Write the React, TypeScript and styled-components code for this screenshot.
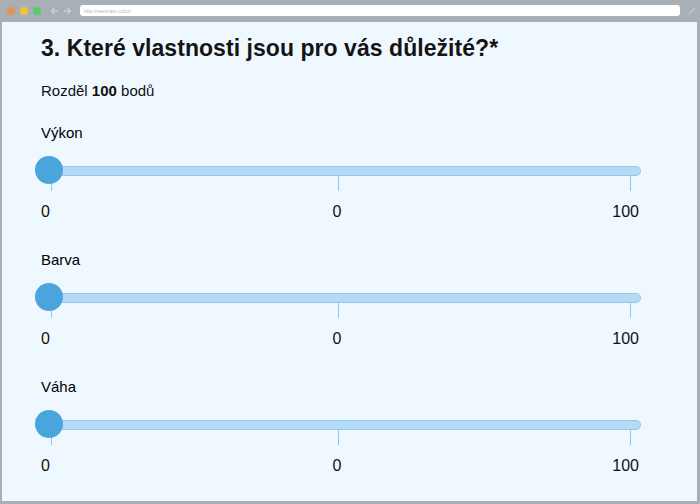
import React from 'react';
import styled, { createGlobalStyle } from 'styled-components';

const GlobalStyle = createGlobalStyle`
  html, body {
    margin: 0;
    padding: 0;
    background: #a8b0b5;
  }
  body {
    font-family: "Liberation Sans", Arial, Helvetica, sans-serif;
    color: #111;
  }
`;

const Window = styled.div`
  width: 700px;
  height: 504px;
  box-sizing: border-box;
  display: flex;
  flex-direction: column;
  background: #a8b0b5;
  padding: 0 3px 3px 2px;
`;

const TopBar = styled.div`
  height: 22px;
  flex: none;
  display: flex;
  align-items: center;
  padding-left: 5px;
  padding-bottom: 1px;
  box-sizing: border-box;
`;

const Dot = styled.span<{ $c: string }>`
  width: 8px;
  height: 8px;
  border-radius: 50%;
  background: ${p => p.$c};
  margin-right: 5px;
`;

const Arrows = styled.div`
  display: flex;
  gap: 4px;
  margin: 0 8px 0 4px;
`;

const UrlBar = styled.div`
  flex: none;
  width: 600px;
  height: 11px;
  background: #fff;
  border-radius: 3px;
  display: flex;
  align-items: center;
  padding-left: 4px;
  box-sizing: border-box;
  font-size: 5px;
  color: #b5bcc0;
`;

const EditIcon = styled.div`
  margin-left: 8px;
  display: flex;
`;

const Content = styled.main`
  flex: 1;
  background: #f0f8ff;
  padding: 12px 56px 0 33px;
`;

const Title = styled.h1`
  margin: 0;
  padding-left: 6px;
  font-size: 23px;
  line-height: 28px;
  font-weight: 700;
  letter-spacing: 0.05px;
  color: #141414;
`;

const Lead = styled.p`
  margin: 19px 0 0;
  padding-left: 6px;
  font-size: 15px;
  line-height: 20px;
`;

const Field = styled.section`
  margin-top: 22px;
  & + & {
    margin-top: 28.5px;
  }
`;

const FieldLabel = styled.div`
  padding-left: 6px;
  font-size: 15px;
  line-height: 20px;
  color: #000;
`;

const Slider = styled.div`
  position: relative;
  height: 35px;
  margin-top: 13px;
`;

const Track = styled.div`
  position: absolute;
  left: 14px;
  right: 0;
  top: 10px;
  height: 10px;
  box-sizing: border-box;
  background: #b3dbf4;
  border: 1px solid #93caec;
  border-left: 0;
  border-radius: 0 6px 6px 0;
`;

const Tick = styled.span`
  position: absolute;
  top: 20px;
  width: 1px;
  height: 15px;
  background: #8ac8ee;
`;

const Thumb = styled.span`
  position: absolute;
  left: 0;
  top: 0;
  width: 28px;
  height: 28px;
  border-radius: 50%;
  background: #4aa5dc;
`;

const Marks = styled.div`
  display: grid;
  grid-template-columns: 1fr auto 1fr;
  margin-top: 10.5px;
  padding: 0 2px 0 6px;
  font-size: 16px;
  line-height: 20px;
`;

const Mark = styled.span<{ $align: 'left' | 'center' | 'right' }>`
  text-align: ${p => p.$align};
  ${p => (p.$align === 'center' ? 'margin-right: 6px;' : '')}
`;

const fields = ['Výkon', 'Barva', 'Váha'];
const ticks = [0, 0.495, 1];

export default function App() {
  return (
    <>
      <GlobalStyle />
      <Window>
        <TopBar>
          <Dot $c="#e2964c" />
          <Dot $c="#f3c636" />
          <Dot $c="#52cf6a" />
          <Arrows>
            <svg width="9" height="8" viewBox="0 0 9 8" fill="none" stroke="#c9d0d4" strokeWidth="1.4">
              <path d="M8 4H1.5M4.5 1L1.5 4l3 3" />
            </svg>
            <svg width="9" height="8" viewBox="0 0 9 8" fill="none" stroke="#c9d0d4" strokeWidth="1.4">
              <path d="M1 4h6.5M4.5 1l3 3-3 3" />
            </svg>
          </Arrows>
          <UrlBar>http://seesnam.cz/cz/</UrlBar>
          <EditIcon>
            <svg width="8" height="8" viewBox="0 0 8 8" fill="none" stroke="#c3cacf" strokeWidth="1.3">
              <path d="M1 7L7 1" />
            </svg>
          </EditIcon>
        </TopBar>
        <Content>
          <Title>3. Které vlastnosti jsou pro vás důležité?*</Title>
          <Lead>
            Rozděl <b>100</b> bodů
          </Lead>
          {fields.map(name => (
            <Field key={name}>
              <FieldLabel>{name}</FieldLabel>
              <Slider>
                <Track />
                {ticks.map(t => (
                  <Tick key={t} style={{ left: `calc(16px + (100% - 27px) * ${t})` }} />
                ))}
                <Thumb />
              </Slider>
              <Marks>
                <Mark $align="left">0</Mark>
                <Mark $align="center">0</Mark>
                <Mark $align="right">100</Mark>
              </Marks>
            </Field>
          ))}
        </Content>
      </Window>
    </>
  );
}
